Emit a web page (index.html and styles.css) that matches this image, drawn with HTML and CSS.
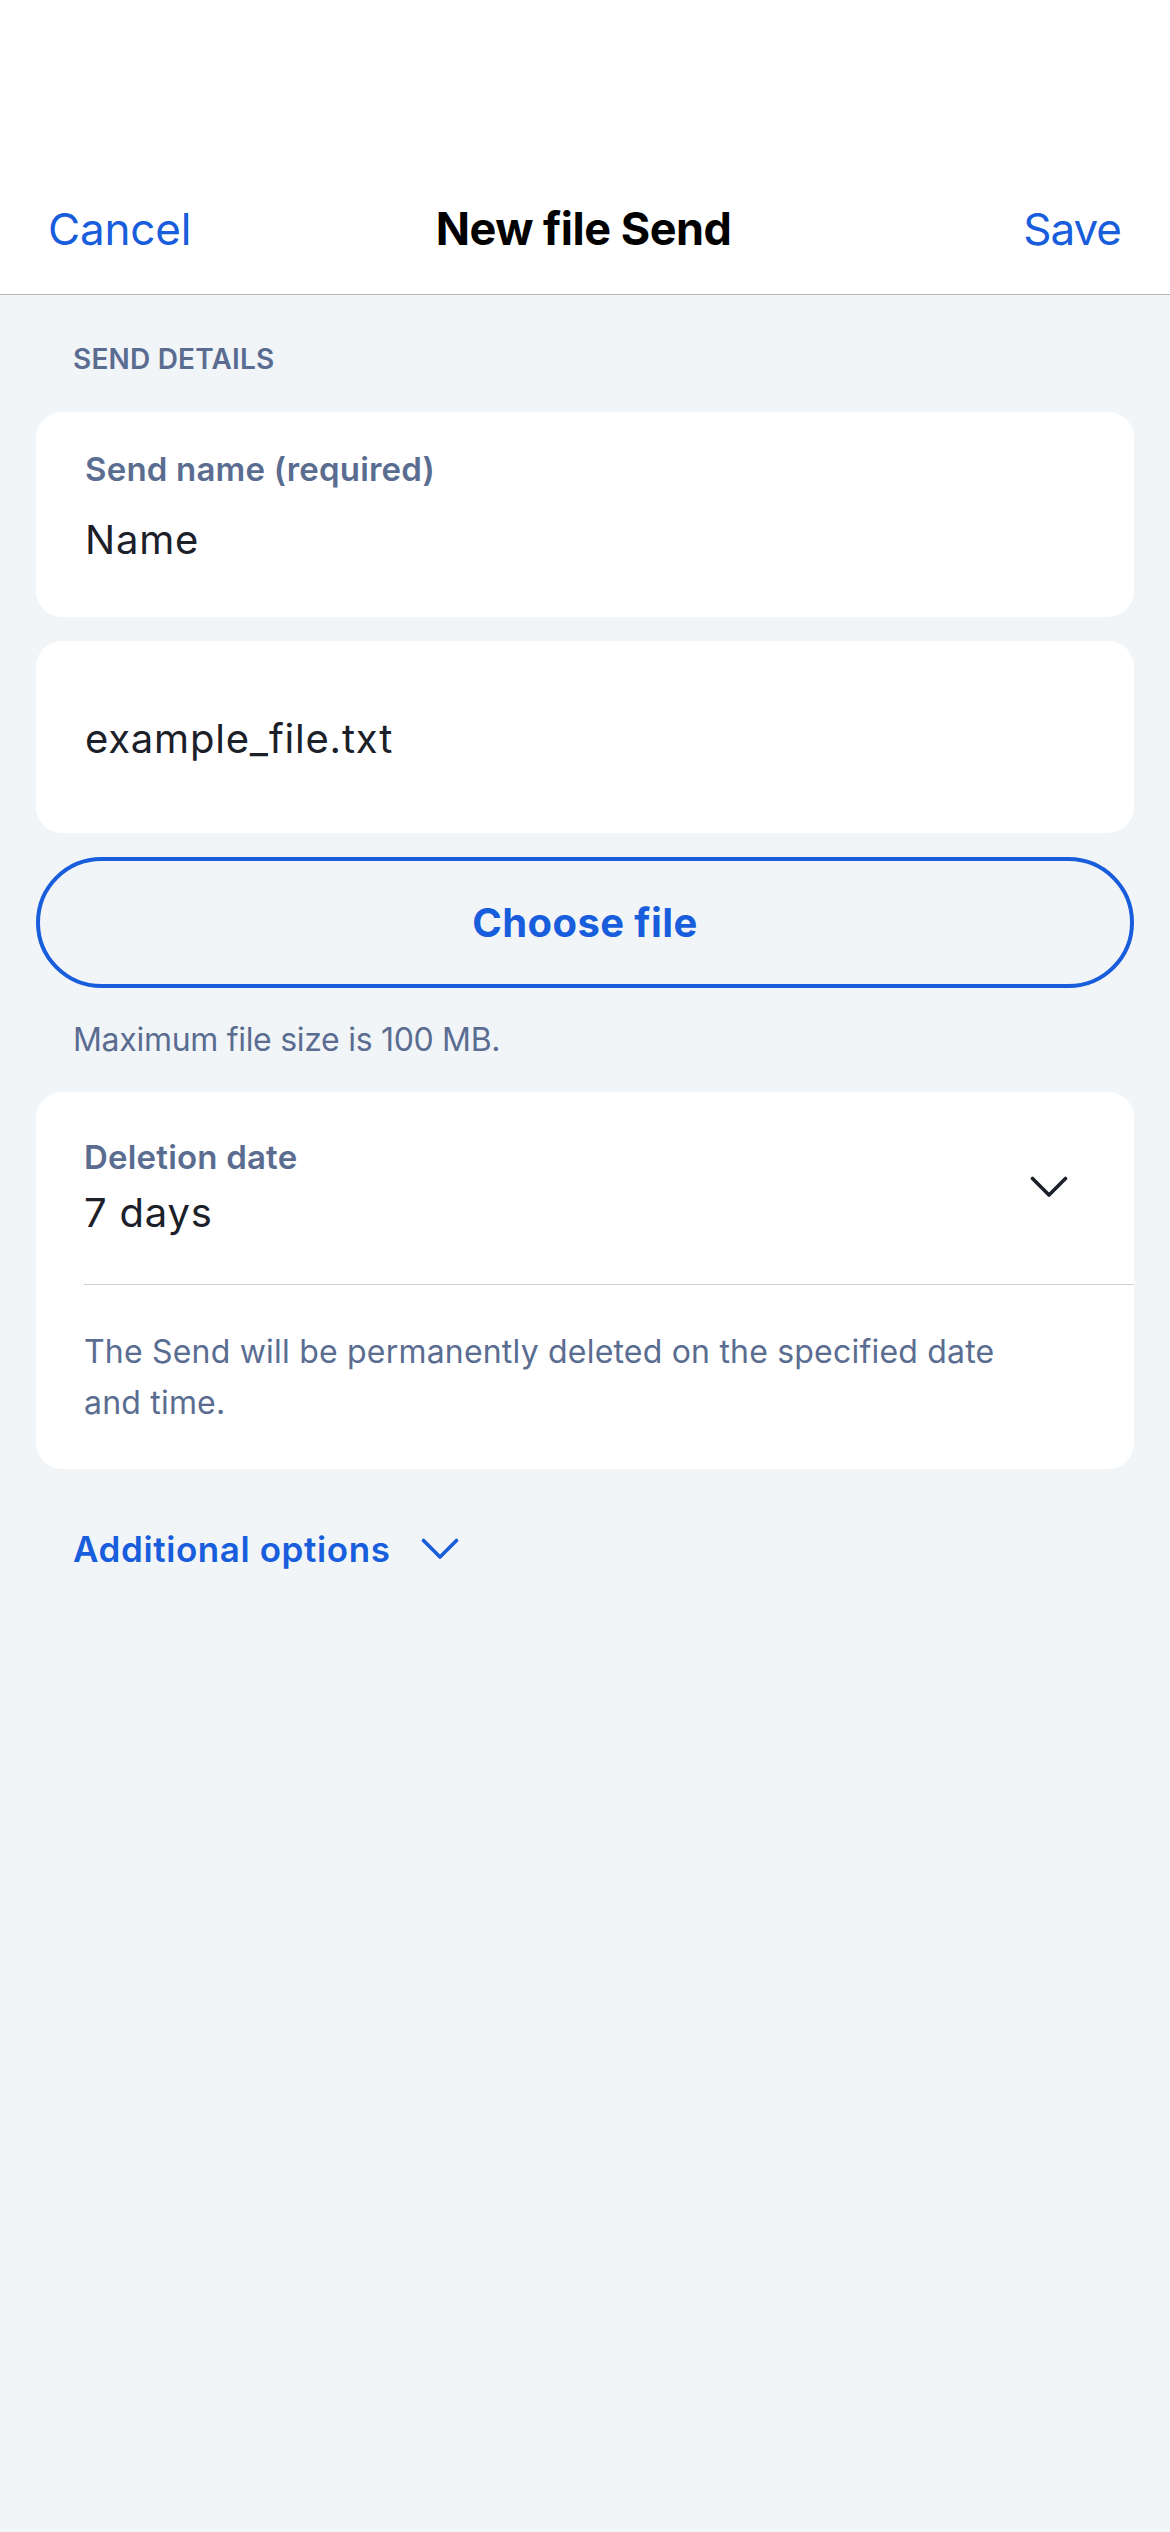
FILE: index.html
```html
<!DOCTYPE html>
<html lang="en">
<head>
<meta charset="utf-8">
<title>New file Send</title>
<link rel="stylesheet" href="styles.css">
</head>
<body>
<header class="topbar">
  <nav class="nav">
    <span class="nav-btn nav-left">Cancel</span>
    <h1 class="nav-title">New file Send</h1>
    <span class="nav-btn nav-right">Save</span>
  </nav>
</header>
<main class="content">
  <h2 class="section-title">SEND DETAILS</h2>

  <section class="card field-card">
    <div class="field-label">Send name (required)</div>
    <div class="field-value">Name</div>
  </section>

  <section class="card file-card">
    <div class="field-value">example_file.txt</div>
  </section>

  <button class="choose-btn" type="button">Choose file</button>

  <p class="helper">Maximum file size is 100 MB.</p>

  <section class="card deletion-card">
    <div class="picker-row">
      <div class="picker-text">
        <div class="field-label">Deletion date</div>
        <div class="field-value">7 days</div>
      </div>
      <svg class="chevron" width="38" height="22" viewBox="0 0 38 22" aria-hidden="true"><path d="M2.5 2.5 L19 19 L35.5 2.5" fill="none" stroke="#1b2029" stroke-width="3.6" stroke-linecap="round" stroke-linejoin="round"/></svg>
    </div>
    <p class="card-note">The Send will be permanently deleted on the specified date and time.</p>
  </section>

  <div class="more-options">
    <span class="more-label">Additional options</span>
    <svg class="chevron" width="38" height="22" viewBox="0 0 38 22" aria-hidden="true"><path d="M2.5 2.5 L19 19 L35.5 2.5" fill="none" stroke="#175ddc" stroke-width="3.6" stroke-linecap="round" stroke-linejoin="round"/></svg>
  </div>
</main>
</body>
</html>
```

FILE: styles.css
```css
* { box-sizing: border-box; }

html, body {
  margin: 0;
  padding: 0;
}

body {
  width: 1170px;
  min-height: 2532px;
  background: #f2f5f8;
  font-family: Inter, "Noto Sans", "Liberation Sans", sans-serif;
  color: #1b2029;
}

.topbar {
  background: #ffffff;
  height: 295px;
  padding-top: 184px;
  border-bottom: 1px solid #b4b4b4;
}

.nav {
  height: 90px;
  display: grid;
  grid-template-columns: 1fr auto 1fr;
  align-items: center;
  padding: 0 49px 0 48px;
}

.nav-btn {
  font-size: 44px;
  line-height: 90px;
  color: #175ddc;
  font-weight: 400;
  letter-spacing: -0.2px;
}

.nav-left { justify-self: start; }
.nav-right { justify-self: end; letter-spacing: -1px; }

.nav-title {
  margin: 0 0 0 -2px;
  font-size: 45px;
  line-height: 90px;
  font-weight: 700;
  color: #000000;
  letter-spacing: -0.5px;
  text-align: center;
}

.content {
  padding: 0 36px;
}

.section-title {
  margin: 0;
  padding: 44px 0 33px 37px;
  font-size: 28px;
  line-height: 40px;
  font-weight: 600;
  color: #5a6d91;
  letter-spacing: 0.2px;
}

.card {
  background: #ffffff;
  border-radius: 26px;
}

.field-card {
  height: 205px;
  padding: 35px 48px 0 49px;
}

.field-label {
  font-size: 33px;
  line-height: 44px;
  font-weight: 600;
  color: #5a6d91;
  letter-spacing: 0.2px;
}

.field-value {
  font-size: 40px;
  line-height: 52px;
  font-weight: 400;
  color: #1b2029;
  letter-spacing: 0.8px;
}

.field-card .field-value {
  margin-top: 23px;
}

.file-card {
  margin-top: 24px;
  height: 192px;
  padding: 72px 48px 0 49px;
}

.choose-btn {
  display: block;
  width: 100%;
  margin-top: 24px;
  height: 131px;
  border: 4px solid #175ddc;
  border-radius: 66px;
  background: transparent;
  font-family: Inter, "Noto Sans", "Liberation Sans", sans-serif;
  font-size: 40px;
  font-weight: 700;
  color: #175ddc;
  letter-spacing: 0.4px;
  padding: 0;
}

.helper {
  margin: 0;
  padding: 30px 0 0 37px;
  height: 104px;
  font-size: 32px;
  line-height: 44px;
  color: #5a6d91;
  letter-spacing: -0.3px;
}

.deletion-card {
  height: 377px;
  padding-top: 43px;
}

.picker-row {
  margin-left: 48px;
  padding-right: 66px;
  padding-bottom: 45px;
  border-bottom: 1px solid #d0d0d0;
  display: flex;
  align-items: center;
  justify-content: space-between;
}

.picker-text .field-value {
  margin-top: 8px;
}

.chevron {
  display: block;
  flex: none;
}

.card-note {
  margin: 0;
  padding: 41px 100px 0 48px;
  font-size: 32px;
  line-height: 51px;
  color: #5a6d91;
  letter-spacing: 0.2px;
}

.more-options {
  margin-top: 58px;
  padding-left: 37px;
  display: flex;
  align-items: center;
  gap: 30px;
}

.more-label {
  font-size: 35px;
  line-height: 44px;
  font-weight: 600;
  color: #175ddc;
  letter-spacing: 0.6px;
}
```
